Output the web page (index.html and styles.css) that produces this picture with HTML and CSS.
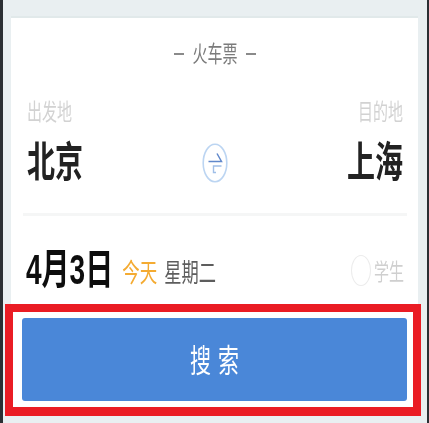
FILE: index.html
```html
<!DOCTYPE html>
<html lang="zh">
<head>
<meta charset="utf-8">
<title>火车票</title>
<link rel="stylesheet" href="styles.css">
</head>
<body>
<main class="screen">
  <section class="card">
    <h1 class="title"><span class="dash"></span><span class="tall">火车票</span><span class="dash"></span></h1>
    <div class="route">
      <div class="place">
        <span class="label tall">出发地</span>
        <strong class="city tall">北京</strong>
      </div>
      <svg class="swap" viewBox="0 0 26 40" aria-hidden="true">
        <ellipse cx="13" cy="20" rx="11.8" ry="18.8" fill="#fff" stroke="#bcd5f2" stroke-width="1.6"/>
        <path d="M6.5 18.5H19.5L15 10.5" fill="none" stroke="#6088cb" stroke-width="1.5"/>
        <path d="M19.5 23H11.5L11.5 29.5L14 29.5" fill="none" stroke="#a0bfe8" stroke-width="1.4"/>
      </svg>
      <div class="place place-end">
        <span class="label tall">目的地</span>
        <strong class="city tall">上海</strong>
      </div>
    </div>
    <hr class="divider">
    <div class="date-row">
      <strong class="date tall">4月3日</strong>
      <span class="today tall">今天</span>
      <span class="weekday tall">星期二</span>
      <span class="student"><span class="radio"></span><span class="tall">学生</span></span>
    </div>
  </section>
  <div class="highlight">
    <button class="search" type="button"><span class="tall">搜索</span></button>
  </div>
</main>
</body>
</html>
```
FILE: styles.css
```css
* { box-sizing: border-box; }
html, body { margin: 0; height: 100%; }
body {
  width: 429px;
  height: 423px;
  overflow: hidden;
  background: #e9eff1;
  font-family: "Liberation Sans", "Noto Sans CJK SC", sans-serif;
}
.screen {
  height: 423px;
  padding: 18px 6px 0 2px;
  display: flex;
  flex-direction: column;
  align-items: stretch;
  border-left: 3px solid #2b2f33;
  border-right: 2px solid #2b2f33;
  filter: blur(0.45px);
}
.tall { display: inline-block; transform: scaleY(1.5); }
.card {
  margin: 0 3px 0 6px;
  height: 286px;
  background: #fff;
  padding: 0 11px 0 12px;
  box-shadow: 0 -2px 0 #e1e9ea;
}
.title {
  margin: 0;
  padding-top: 25px;
  height: 83px;
  display: flex;
  justify-content: center;
  align-items: flex-start;
  gap: 8px;
  font-size: 15px;
  line-height: 22px;
  font-weight: 400;
  color: #7b7b7b;
}
.dash { width: 10px; height: 2px; margin-top: 10px; background: #8a8a8a; }
.route {
  display: flex;
  justify-content: space-between;
  align-items: flex-start;
  padding: 0 4px;
}
.place { display: flex; flex-direction: column; gap: 20px; align-items: flex-start; }
.place-end { align-items: flex-end; }
.label { font-size: 15px; line-height: 22px; color: #d2d2d2; }
.city { font-size: 28px; line-height: 40px; font-weight: 700; color: #222; }
.swap { width: 26px; height: 40px; margin-top: 42px; }
.divider {
  height: 3px;
  margin: 30px 0 0;
  border: 0;
  background: #f5f6f6;
}
.date-row {
  display: flex;
  align-items: center;
  margin-top: 32px;
  padding: 0 3px;
}
.date { font-size: 28px; line-height: 44px; font-weight: 700; color: #0d0d0d; }
.today { margin-left: 9px; font-size: 17.5px; color: #f4ab32; }
.weekday { margin-left: 7px; font-size: 17.3px; color: #5d5d5d; }
.student {
  margin-left: auto;
  display: flex;
  align-items: center;
  gap: 3px;
  font-size: 15px;
  color: #cfcfcf;
}
.radio {
  width: 20px;
  height: 31px;
  border: 1.5px solid #ececec;
  border-radius: 50%;
}
.highlight {
  height: 112px;
  padding: 6px 6px 6px 9px;
  border: 8px solid #ea1c24;
  border-bottom-width: 9px;
  background: #fff;
}
.search {
  display: block;
  width: 100%;
  height: 83px;
  border: 0;
  border-radius: 3px;
  background: #4a87d8;
  color: #fff;
  font: inherit;
  font-size: 21px;
  letter-spacing: 7px;
  padding: 0 0 4px 7px;
}
```
